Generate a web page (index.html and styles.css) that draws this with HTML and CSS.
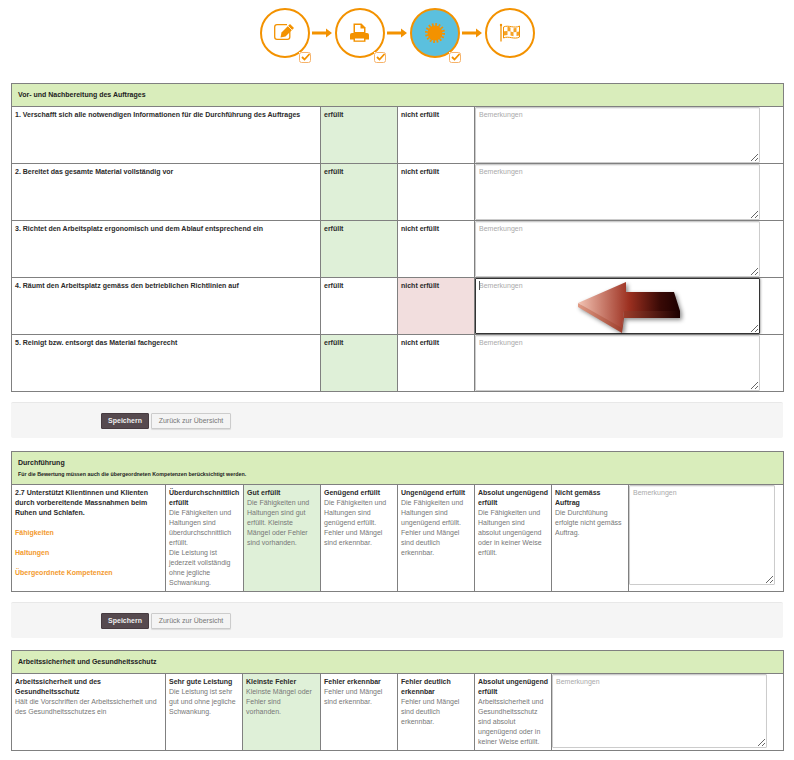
FILE: index.html
```html
<!DOCTYPE html>
<html lang="de">
<head>
<meta charset="utf-8">
<title>Auftrag</title>
<link rel="stylesheet" href="styles.css">
</head>
<body>
<nav class="stepper">
  <div class="step">
    <svg class="step-icon" viewBox="0 0 50 50"><circle class="ring" cx="25" cy="25" r="24"/><path class="line" d="M27 16.700H17a2.300 2.300 0 0 0-2.300 2.300v10a2.300 2.300 0 0 0 2.300 2.300h10.500a2.300 2.300 0 0 0 2.300-2.300v-6"/><path class="solid" d="M21.500 24.500l8.500-8.500 4 4-8.500 8.500-5 1z"/><path class="gap" d="M28 18l4 4"/></svg>
    <svg class="tick" viewBox="0 0 12 11"><rect class="tick-box" x="0.500" y="0.500" width="11" height="10" rx="2"/><path class="tick-mark" d="M3 5l2.500 2.500L10.500 2"/></svg>
  </div>
  <svg class="arrow" viewBox="0 0 25 50"><path class="solid" d="M2 23.500h14v-3l6 4.500-6 4.500v-3H2z"/></svg>
  <div class="step">
    <svg class="step-icon" viewBox="0 0 50 50"><circle class="ring" cx="25" cy="25" r="24"/><path class="solid" d="M18.500 15.500h8l4 4v5.500h-12z"/><path class="solid" d="M15 27a2 2 0 0 1 2-2h15a2 2 0 0 1 2 2v4.500H15z"/><path class="paper" d="M20 17h5.500v3.500H29V24h-9z"/><path class="solid" d="M18.500 31h12v2.800h-12z"/><path class="paper" d="M20 30.500h9v2h-9z"/></svg>
    <svg class="tick" viewBox="0 0 12 11"><rect class="tick-box" x="0.500" y="0.500" width="11" height="10" rx="2"/><path class="tick-mark" d="M3 5l2.500 2.500L10.500 2"/></svg>
  </div>
  <svg class="arrow" viewBox="0 0 25 50"><path class="solid" d="M2 23.500h14v-3l6 4.500-6 4.500v-3H2z"/></svg>
  <div class="step">
    <svg class="step-icon" viewBox="0 0 50 50"><circle class="ring active" cx="25" cy="25" r="24"/><circle class="solid" cx="25" cy="25" r="7.500"/><circle class="teeth" cx="25" cy="25" r="8.500"/></svg>
    <svg class="tick" viewBox="0 0 12 11"><rect class="tick-box" x="0.500" y="0.500" width="11" height="10" rx="2"/><path class="tick-mark" d="M3 5l2.500 2.500L10.500 2"/></svg>
  </div>
  <svg class="arrow" viewBox="0 0 25 50"><path class="solid" d="M2 23.500h14v-3l6 4.500-6 4.500v-3H2z"/></svg>
  <div class="step">
    <svg class="step-icon" viewBox="0 0 50 50"><circle class="ring" cx="25" cy="25" r="24"/><path class="line" d="M16 18v15.500"/><circle class="solid" cx="16" cy="17" r="1.200"/><path class="flag" d="M18.500 19c5-2.500 11 2 16-1v11c-5 3-11-1.500-16 1z"/><path class="cells" d="M22.500 18.700l3 .8v4l-3-.6zM28.500 20.200l3-.1v4l-3 .1zM19 23.300l3.500-.4v4l-3.500.6zM25.500 23.500l3 .7v4l-3-.8zM31.500 24.100l2.800-.6v4l-2.800.6z"/></svg>
  </div>
</nav>

<main class="content">
  <table class="grid grid-a">
    <colgroup><col class="c-309"><col class="c-77"><col class="c-77"><col></colgroup>
    <thead><tr><th colspan="4" class="head">Vor- und Nachbereitung des Auftrages</th></tr></thead>
    <tbody>
      <tr>
        <td class="label">1. Verschafft sich alle notwendigen Informationen für die Durchführung des Auftrages</td>
        <td class="label green">erfüllt</td><td class="label">nicht erfüllt</td>
        <td class="note-cell"><textarea class="note note-a" placeholder="Bemerkungen"></textarea></td>
      </tr>
      <tr>
        <td class="label">2. Bereitet das gesamte Material vollständig vor</td>
        <td class="label green">erfüllt</td><td class="label">nicht erfüllt</td>
        <td class="note-cell"><textarea class="note note-a" placeholder="Bemerkungen"></textarea></td>
      </tr>
      <tr>
        <td class="label">3. Richtet den Arbeitsplatz ergonomisch und dem Ablauf entsprechend ein</td>
        <td class="label green">erfüllt</td><td class="label">nicht erfüllt</td>
        <td class="note-cell"><textarea class="note note-a" placeholder="Bemerkungen"></textarea></td>
      </tr>
      <tr>
        <td class="label">4. Räumt den Arbeitsplatz gemäss den betrieblichen Richtlinien auf</td>
        <td class="label">erfüllt</td><td class="label red">nicht erfüllt</td>
        <td class="note-cell overlay-host">
          <textarea class="note note-a note-focus" placeholder="Bemerkungen"></textarea>
          <span class="caret"></span>
          <svg class="pointer" viewBox="0 0 115 60">
            <defs>
              <linearGradient id="front" x1="0" x2="1" y1="0" y2="0"><stop offset="0" stop-color="#f3c4b4"/><stop offset="0.5" stop-color="#9c3020"/><stop offset="0.8" stop-color="#3a0a06"/><stop offset="1" stop-color="#1c0000"/></linearGradient>
              <linearGradient id="edge" x1="0" x2="1" y1="0" y2="0"><stop offset="0" stop-color="#e09a84"/><stop offset="0.45" stop-color="#9c3c2a"/><stop offset="1" stop-color="#1c0000"/></linearGradient>
            </defs>
            <polygon fill="url(#edge)" points="3,23 3,27 47,53 49,38 105,38 105,31 49,31 47,46"/>
            <polygon fill="url(#front)" points="3,23 51,2 51,12 99,12 105,31 49,31 47,48"/>
          </svg>
        </td>
      </tr>
      <tr>
        <td class="label">5. Reinigt bzw. entsorgt das Material fachgerecht</td>
        <td class="label green">erfüllt</td><td class="label">nicht erfüllt</td>
        <td class="note-cell"><textarea class="note note-a" placeholder="Bemerkungen"></textarea></td>
      </tr>
    </tbody>
  </table>

  <div class="actions"><button class="btn btn-primary">Speichern</button><button class="btn btn-plain">Zurück zur Übersicht</button></div>

  <table class="grid grid-b">
    <colgroup><col class="c-154"><col class="c-78"><col class="c-77"><col class="c-77"><col class="c-77"><col class="c-77"><col class="c-77"><col></colgroup>
    <thead><tr><th colspan="8" class="head head-tall"><div>Durchführung</div><div class="head-sub">Für die Bewertung müssen auch die übergeordneten Kompetenzen berücksichtigt werden.</div></th></tr></thead>
    <tbody>
      <tr>
        <td class="cell"><b>2.7 Unterstützt Klientinnen und Klienten durch vorbereitende Massnahmen beim Ruhen und Schlafen.</b><div class="comp">Fähigkeiten</div><div class="comp">Haltungen</div><div class="comp">Übergeordnete Kompetenzen</div></td>
        <td class="cell"><b>Überdurchschnittlich erfüllt</b><br>Die Fähigkeiten und Haltungen sind überdurchschnittlich erfüllt.<br>Die Leistung ist jederzeit vollständig ohne jegliche Schwankung.</td>
        <td class="cell green"><b>Gut erfüllt</b><br>Die Fähigkeiten und Haltungen sind gut erfüllt. Kleinste Mängel oder Fehler sind vorhanden.</td>
        <td class="cell"><b>Genügend erfüllt</b><br>Die Fähigkeiten und Haltungen sind genügend erfüllt. Fehler und Mängel sind erkennbar.</td>
        <td class="cell"><b>Ungenügend erfüllt</b><br>Die Fähigkeiten und Haltungen sind ungenügend erfüllt. Fehler und Mängel sind deutlich erkennbar.</td>
        <td class="cell"><b>Absolut ungenügend erfüllt</b><br>Die Fähigkeiten und Haltungen sind absolut ungenügend oder in keiner Weise erfüllt.</td>
        <td class="cell"><b>Nicht gemäss Auftrag</b><br>Die Durchfühung erfolgte nicht gemäss Auftrag.</td>
        <td class="note-cell"><textarea class="note note-b" placeholder="Bemerkungen"></textarea></td>
      </tr>
    </tbody>
  </table>

  <div class="actions actions-tight"><button class="btn btn-primary">Speichern</button><button class="btn btn-plain">Zurück zur Übersicht</button></div>

  <table class="grid grid-c">
    <colgroup><col class="c-154"><col class="c-77"><col class="c-78"><col class="c-77"><col class="c-77"><col class="c-77"><col></colgroup>
    <thead><tr><th colspan="7" class="head">Arbeitssicherheit und Gesundheitsschutz</th></tr></thead>
    <tbody>
      <tr>
        <td class="cell"><b>Arbeitssicherheit und des Gesundheitsschutz</b><br>Hält die Vorschriften der Arbeitssicherheit und des Gesundheitsschutzes ein</td>
        <td class="cell"><b>Sehr gute Leistung</b><br>Die Leistung ist sehr gut und ohne jegliche Schwankung.</td>
        <td class="cell green"><b>Kleinste Fehler</b><br>Kleinste Mängel oder Fehler sind vorhanden.</td>
        <td class="cell"><b>Fehler erkennbar</b><br>Fehler und Mängel sind erkennbar.</td>
        <td class="cell"><b>Fehler deutlich erkennbar</b><br>Fehler und Mängel sind deutlich erkennbar.</td>
        <td class="cell"><b>Absolut ungenügend erfüllt</b><br>Arbeitssicherheit und Gesundheitsschutz sind absolut ungenügend oder in keiner Weise erfüllt.</td>
        <td class="note-cell"><textarea class="note note-c" placeholder="Bemerkungen"></textarea></td>
      </tr>
    </tbody>
  </table>
</main>
</body>
</html>
```
FILE: styles.css
```css
* { box-sizing: border-box; }
html, body { margin: 0; padding: 0; background: #fff; }
body { font-family: "Liberation Sans", Arial, sans-serif; font-size: 7px; line-height: 10px; color: #777; }

/* stepper */
.stepper { display: flex; justify-content: center; padding: 8px 0 0 1px; height: 83px; }
.step { position: relative; width: 50px; height: 50px; }
.step-icon { display: block; width: 50px; height: 50px; }
.arrow { display: block; width: 25px; height: 50px; }
.ring { fill: #fff; stroke: #f39200; stroke-width: 2; }
.ring.active { fill: #5bc0de; }
.solid { fill: #f39200; }
.line { fill: none; stroke: #f39200; stroke-width: 1.300; }
.flag { fill: #fff; stroke: #f39200; stroke-width: 1; }
.cells { fill: #f39200; opacity: 0.85; }
.gap { fill: none; stroke: #fff; stroke-width: 0.800; }
.paper { fill: #fff; }
.teeth { fill: none; stroke: #f39200; stroke-width: 3; stroke-dasharray: 1.670 1.670; }
.tick { position: absolute; left: 39px; top: 44px; width: 12px; height: 11px; background: #fff; }
.tick-box { fill: #fff; stroke: #f6b36b; stroke-width: 1; }
.tick-mark { fill: none; stroke: #f39200; stroke-width: 1.800; }

/* layout */
.content { margin: 0 10px 0 11px; }
.grid { width: 773px; table-layout: fixed; border-collapse: collapse; background: #fff; }
.grid td, .grid th { border: 1px solid #808080; vertical-align: top; }
.c-309 { width: 309px; }
.c-154 { width: 154px; }
.c-78 { width: 78px; }
.c-77 { width: 77px; }

.head { height: 23px; background: #d9edbb; padding: 0 6px; text-align: left; vertical-align: middle !important; font-size: 7px; font-weight: bold; color: #222; }
.head-tall { height: 33px; }
.head-sub { font-size: 5.300px; line-height: 10px; margin-top: 1px; }

.grid-a tbody tr { height: 57px; }
.grid-b tbody tr { height: 107px; }
.grid-c tbody tr { height: 77px; }

.label { padding: 3px; font-weight: bold; color: #2b2b2b; }
.cell { padding: 3px; }
.cell b { color: #2b2b2b; }
.comp { margin-top: 10px; color: #f39a2e; font-weight: bold; }
.green { background: #dff0d8; }
.red { background: #f2dede; }

.note-cell { padding: 0; overflow: hidden; }
.overlay-host { position: relative; }
.note { display: block; margin: 0; padding: 2px 3px; border: 1px solid #ccc; border-radius: 1px; box-shadow: inset 0 1px 1px rgba(0,0,0,.075); background: #fff; font: 7px/10px "Liberation Sans", Arial, sans-serif; color: #555; outline: none; }
.note::placeholder { color: #aaa; opacity: 1; }
.note-a { width: 285px; height: 56px; }
.note-b { width: 146px; height: 100px; }
.note-c { width: 215px; height: 74px; }
.note-focus { border-color: #333; box-shadow: 0 0 3px rgba(0,0,0,.6); }
.caret { position: absolute; left: 4px; top: 3px; width: 1px; height: 9px; background: #555; }
.pointer { position: absolute; left: 100px; top: 2px; width: 115px; height: 60px; filter: drop-shadow(2px 2px 2px rgba(0,0,0,.45)); }

/* action bar */
.actions { display: flex; gap: 2px; height: 36px; margin: 10px 0 13px; padding: 10px 0 0 90px; width: 772px; background: #f5f5f5; border-top: 1px solid #e8e8e8; border-radius: 2px; }
.actions-tight { margin-bottom: 12px; }
.btn { height: 16px; padding: 0; border-radius: 1px; font: 7px/14px "Liberation Sans", Arial, sans-serif; white-space: nowrap; }
.btn-primary { width: 48px; background: #564a4f; border: 1px solid #463b40; color: #eee; font-weight: bold; }
.btn-plain { width: 80px; background: #f4f4f4; border: 1px solid #ccc; color: #777; box-shadow: 0 1px 1px rgba(0,0,0,.1); }
```
